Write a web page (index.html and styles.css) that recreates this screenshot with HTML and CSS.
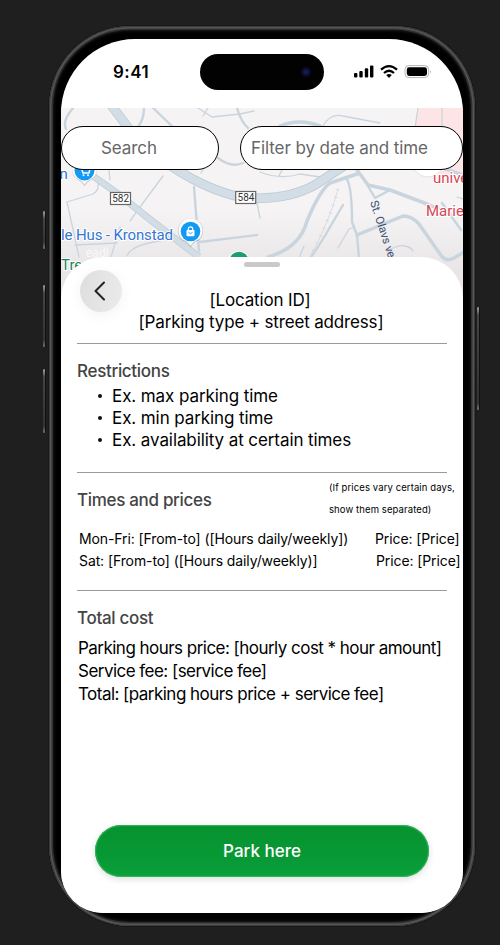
FILE: index.html
```html
<!DOCTYPE html>
<html lang="en">
<head>
<meta charset="utf-8">
<title>Parking details</title>
<link rel="stylesheet" href="styles.css">
</head>
<body>
<div class="phone">
  <span class="key key-action"></span>
  <span class="key key-up"></span>
  <span class="key key-down"></span>
  <span class="key key-power"></span>
  <main class="screen">
    <header class="status">
      <span class="clock">9:41</span>
      <span class="island"><i class="lens"></i></span>
      <svg class="indicators" width="78" height="16" viewBox="352 64 78 16">
        <g fill="#000">
          <rect x="354" y="73" width="3.4" height="4.6" rx="1"/>
          <rect x="359.3" y="71" width="3.4" height="6.6" rx="1"/>
          <rect x="364.8" y="68.3" width="3.4" height="9.3" rx="1"/>
          <rect x="370" y="65.4" width="3.4" height="12.2" rx="1"/>
        </g>
        <g fill="none" stroke="#000" stroke-width="2.3">
          <path d="M381 69.6Q389 62.6 397 69.6"/>
          <path d="M384 73Q389 68.6 394 73"/>
        </g>
        <path d="M386.2 75Q389 72.8 391.8 75L389 78Z"/>
        <rect x="405" y="65.6" width="23.6" height="12" rx="3.8" fill="none" stroke="#b4b4b4"/>
        <rect x="406.8" y="67.3" width="20.2" height="8.7" rx="2.4"/>
        <path d="M430 69.8Q431.8 71.7 430 73.6Z" fill="#aaa"/>
      </svg>
    </header>

    <section class="map">
      <svg class="map-art" width="402" height="205" viewBox="61 108 402 205">
        <defs>
          <linearGradient id="fade" x1="0" y1="0" x2="0" y2="1">
            <stop offset="0" stop-color="#f6f3f4"/><stop offset=".5" stop-color="#f5f3f4"/><stop offset=".8" stop-color="#e9e5e7"/>
          </linearGradient>
        </defs>
        <rect x="61" y="108" width="402" height="205" fill="url(#fade)"/>
        <path d="M418 108H463V175H440L414 130Z" fill="#fde5e5"/>
        <g fill="none" stroke="#c9d5de" stroke-linecap="round" stroke-linejoin="round">
          <g stroke-width="1.3">
            <path d="M198 108L212 117L240 114L254 111M203 116L208 108M163 176L140 207L130 221M67 202L93 194Q99 190 98 184M67 202L79 257M75 245L117 243M120 227L111 257M127 256Q130 248 145 244L172 238M109 170L110 180M204 167L201 173M257 203L260 218"/>
            <path d="M323 126Q330 113 343 116L380 123M418 108L415 128M442 108V127M260 172Q280 180 300 174L320 177M279 176L283 168M387 252Q397 244 405 246Q411 247 413 251M338 248L349 229L354 227M457 197L463 199M296 265L304 246"/>
          </g>
          <g stroke-width="2.4">
            <path d="M73 108Q62 121 66 129M144 108Q144 119 138 127M153 108L174 128M237 108Q241 122 248 128M218 158Q231 168 243 163M194 187L199 251M200 242L257 235M346 178Q352 185 352 222L357 235L359 259M368 186L375 198L390 190M343 205L330 227Q323 240 311 257M442 203L461 230"/>
          </g>
          <g stroke-width="3.5">
            <path d="M280 126Q299 118 320 126M307 221Q320 190 330 183L357 174M357 170L368 185L390 190L427 204L450 214M443 168L463 175M307 221Q300 248 268 257M357 235L403 216Q412 216 419 224L440 254Q446 263 454 258L464 252"/>
          </g>
        </g>
        <g fill="none" stroke="#bccad4" stroke-linecap="butt">
          <path d="M111 105L130 130Q150 154 174 168Q208 190 240 197Q284 202 315 185Q330 175 344 166" stroke-width="9.5"/>
          <path d="M90 174L117 193L152 221L199 257" stroke-width="7"/>
        </g>
        <g fill="none" stroke="#d2dde5">
          <path d="M111 105L130 130Q150 154 174 168Q208 190 240 197Q284 202 315 185Q330 175 344 166" stroke-width="8"/>
          <path d="M90 174L117 193L152 221L199 257" stroke-width="5.6"/>
        </g>
        <g fill="none" stroke="#d6d6d9">
          <path d="M338 189Q330 220 310 257" stroke-width=".8"/>
          <path d="M338 189Q330 220 310 257" stroke-width="3.500" stroke-dasharray=".8 7.500"/>
        </g>
        <circle cx="428" cy="161" r="16" fill="#fff" stroke="#ddd" stroke-width=".8"/>
        <g fill="#fff" stroke="#666" stroke-width="1.2">
          <rect x="110.5" y="192.5" width="20" height="12"/>
          <rect x="235.7" y="191.5" width="20" height="12"/>
        </g>
        <g class="shields"><text x="120.7" y="202.2">582</text><text x="246" y="201.2">584</text></g>
        <g class="places">
          <text x="59.5" y="178.500" class="shop">n</text>
          <text x="61" y="239.5" class="shop" textLength="112">le Hus - Kronstad</text>
          <text x="61" y="269.5" class="park">Tre</text>
          <text x="86" y="257" class="ghost">eadi</text>
          <text x="433" y="183" class="clinic">unive</text>
          <text x="426" y="216" class="clinic">Marie</text>
        </g>
        <text class="street" transform="translate(370 202) rotate(72)">St. Olavs vei</text>
        <g>
          <path d="M84.500 186Q81 181 76 178.500A12.500 12.500 0 1 1 93 178.500Q88 181 84.500 186Z" fill="#aaa" opacity=".6"/>
          <path d="M84.500 184.500Q82 180 76 178A12.300 12.300 0 1 1 93 178Q87 180 84.500 184.500Z" fill="#fff"/>
          <circle cx="84.500" cy="170.500" r="10" fill="#129af5"/>
          <path d="M79 167H81L83 173H89L90 168.500H82" fill="none" stroke="#fff" stroke-width="1.4"/>
          <circle cx="83.500" cy="175.300" r="1" fill="#fff"/><circle cx="88" cy="175.300" r="1" fill="#fff"/>
        </g>
        <g>
          <path d="M190.500 247.500Q188 242 182.500 240.500A12.500 12.500 0 1 1 198.500 240.500Q193 242 190.500 247.500Z" fill="#999" opacity=".6"/>
          <path d="M190.500 246Q188 241 182.500 239.500A12 12 0 1 1 198.500 239.500Q193 241 190.500 246Z" fill="#fff"/>
          <circle cx="190.500" cy="231.500" r="9.800" fill="#129af5"/>
          <rect x="186.500" y="230" width="8" height="6.200" rx=".8" fill="#fff"/>
          <path d="M188.300 230V229A2.200 2.200 0 0 1 192.700 229V230" fill="none" stroke="#fff" stroke-width="1.200"/>
          <path d="M188.500 232.300Q190.500 235 192.500 232.300" fill="none" stroke="#129af5" stroke-width=".9"/>
        </g>
        <circle cx="239" cy="262" r="11" fill="#fff"/>
        <circle cx="239" cy="261.500" r="9.800" fill="#1b9e6c"/>
      </svg>
      <div class="filters">
        <div class="pill search">Search</div>
        <div class="pill date">Filter by date and time</div>
      </div>
    </section>

    <section class="sheet">
      <div class="handle"></div>
      <button class="back" aria-label="Back"><svg width="14" height="22" viewBox="0 0 14 22"><path d="M11 2.500L2.500 11L11 19.500" fill="none" stroke="#222" stroke-width="2" stroke-linecap="round" stroke-linejoin="round"/></svg></button>
      <div class="title"><div class="loc">[Location ID]</div><div class="addr">[Parking type + street address]</div></div>

      <section class="block restrictions">
        <h2>Restrictions</h2>
        <ul><li>Ex. max parking time</li><li>Ex. min parking time</li><li>Ex. availability at certain times</li></ul>
      </section>

      <section class="block times">
        <div class="times-head"><h2>Times and prices</h2><p class="note">(If prices vary certain days,<br>show them separated)</p></div>
        <div class="row"><span class="hours">Mon-Fri: [From-to] ([Hours daily/weekly])</span><span>Price: [Price]</span></div>
        <div class="row"><span class="hours">Sat: [From-to] ([Hours daily/weekly)]</span><span>Price: [Price]</span></div>
      </section>

      <section class="block total">
        <h2>Total cost</h2>
        <p>Parking hours price: [hourly cost * hour amount]</p>
        <p>Service fee: [service fee]</p>
        <p>Total: [parking hours price + service fee]</p>
      </section>

      <button class="park-btn">Park here</button>
    </section>
  </main>
</div>
</body>
</html>
```
FILE: styles.css
```css
* { box-sizing: border-box; }
body {
  margin: 0;
  height: 945px;
  overflow: hidden;
  background: #1f1f1f;
  font-family: Inter, "Liberation Sans", sans-serif;
  font-size: 17px;
  color: #000;
}
h2, p, ul { margin: 0; padding: 0; }
button { border: 0; padding: 0; font: inherit; }

.phone {
  position: relative;
  width: 426px;
  height: 900px;
  margin: 26px 0 0 49px;
  padding: 13px 12px;
  border-radius: 81px;
  background: #000;
  box-shadow: 0 0 0 1px #181818, inset 0 0 0 1px #3a3a3a, inset 0 0 0 2.5px #555, inset 0 0 0 4px #303030, inset 0 0 3px 5px #181818;
}
.key {
  position: absolute;
  width: 3px;
  border-radius: 2px;
  background: linear-gradient(#aaa, #444 8px, #333 calc(100% - 7px), #777);
  border-right: 1px solid #111;
}
.key-action { left: -6px; top: 185px; height: 38px; }
.key-up { left: -6px; top: 259px; height: 62px; }
.key-down { left: -6px; top: 343px; height: 64px; }
.key-power { left: 428px; top: 281px; height: 103px; }

.screen {
  position: relative;
  width: 402px;
  height: 874px;
  overflow: hidden;
  border-radius: 74px 74px 42px 42px;
  background: #fff;
}

.status { display: flex; align-items: center; height: 69px; padding: 0 0 4px 52px; }
.clock { width: 87px; font-weight: 600; letter-spacing: .45px; }
.island {
  display: flex;
  align-items: center;
  justify-content: flex-end;
  width: 124px;
  height: 36px;
  padding-right: 13px;
  border-radius: 18px;
  background: #020202;
}
.lens { width: 10px; height: 10px; border-radius: 50%; background: radial-gradient(#18245c, #0a0a28 55%, #080410); }
.indicators { margin-left: 28px; overflow: visible; }

.map { position: relative; height: 205px; padding-top: 18px; }
.map-art { position: absolute; inset: 0; }
.map-art text { font-family: Roboto, sans-serif; }
.shields text { font-size: 10px; text-anchor: middle; fill: #333; }
.places text { font-size: 15px; paint-order: stroke; stroke: #fff; stroke-width: 2px; }
.places .shop { fill: #3575d3; }
.places .park { fill: #188560; }
.places .clinic { fill: #d64554; }
.places .ghost { fill: #fff; stroke: none; font-size: 12px; opacity: .7; }
.map-art .street { font-size: 11.5px; fill: #3a5070; }
.filters { position: relative; display: flex; justify-content: space-between; }
.pill {
  height: 44px;
  border: 1px solid #000;
  border-radius: 22px;
  background: #fff;
  color: #666;
  line-height: 43px;
  letter-spacing: -.08px;
  white-space: nowrap;
}
.search { width: 158px; padding-left: 39px; }
.date { width: 223px; padding-left: 10px; }

.sheet {
  position: relative;
  height: 656px;
  margin-top: -56px;
  padding: 5px 16px 0;
  border-radius: 42px 42px 0 0;
  background: #fff;
}
.handle { width: 36px; height: 5px; margin: 0 auto; border-radius: 3px; background: #c9c9c9; }
.back {
  position: absolute;
  left: 19px;
  top: 13px;
  display: grid;
  place-items: center;
  width: 42px;
  height: 42px;
  padding-right: 3px;
  border-radius: 50%;
  background: linear-gradient(100deg, #dedede, #ebebeb);
  box-shadow: 0 3px 14px rgba(0, 0, 0, .05);
}
.title { height: 76px; padding-top: 22px; text-align: center; line-height: 22px; letter-spacing: -.16px; white-space: nowrap; }
.loc { padding-right: 4px; }
.addr { padding-right: 2px; }

.block { border-top: 1px solid #9a9a9a; white-space: nowrap; }
h2 { font-size: 17px; font-weight: 450; line-height: 22px; letter-spacing: -.32px; color: #444; }
.restrictions { height: 129px; padding-top: 16px; }
ul { margin-top: 3px; list-style: none; line-height: 22px; letter-spacing: -.09px; }
li { display: flex; align-items: center; padding-left: 21px; }
li::before { content: ""; width: 4px; height: 4px; margin-right: 10px; border-radius: 50%; background: #111; }
.times { height: 118px; padding-top: 4px; }
.times-head { display: flex; height: 51px; }
.times-head h2 { flex: none; width: 252px; padding-top: 12px; }
.note { font-size: 9.5px; line-height: 22px; letter-spacing: .1px; }
.row { display: flex; padding-left: 2px; font-size: 14px; line-height: 22px; letter-spacing: -.1px; }
.hours { flex: none; width: 296px; }
.row + .row .hours { width: 297px; }
.total { height: 235px; padding-top: 16px; }
.total p { padding-left: 1px; line-height: 23px; letter-spacing: -.53px; }
.total h2 + p { margin-top: 8px; }
.park-btn {
  display: block;
  width: 334px;
  height: 52px;
  margin-left: 18px;
  border-radius: 26px;
  background: linear-gradient(#06922f, #089a36 70%, #0aa03b);
  box-shadow: inset 0 0 1px 1px #35b75c, 0 2px 7px rgba(0, 0, 0, .14);
  color: #fff;
  font-weight: 500;
}
```
